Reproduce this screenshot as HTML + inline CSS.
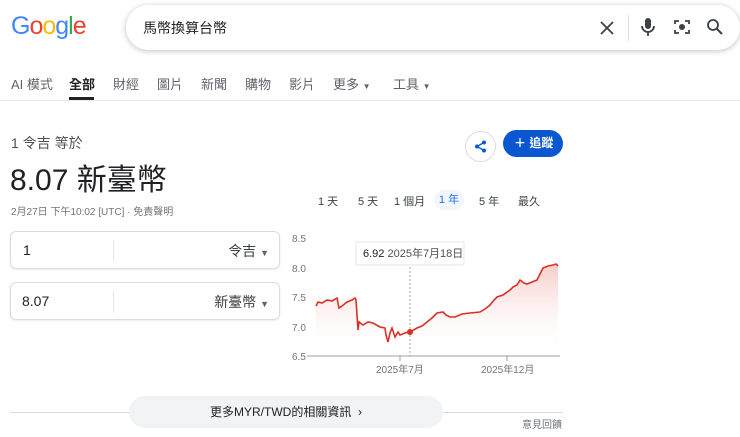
<!DOCTYPE html>
<html><head><meta charset="utf-8"><style>
*{margin:0;padding:0;box-sizing:border-box}
body{width:740px;height:437px;overflow:hidden;background:#fff;font-family:"Liberation Sans","Noto Sans CJK TC",sans-serif;color:#202124;position:relative}
.a{position:absolute}
.logo{left:11px;top:12px;font-size:25px;letter-spacing:-1px;font-family:"Liberation Sans",sans-serif}
.search{left:126px;top:5px;width:614px;height:45px;border-radius:24px;box-shadow:0 1px 6px rgba(32,33,36,.28);background:#fff}
.tabs span{position:absolute;top:74px;font-size:13px;color:#5f6368;white-space:nowrap}
.dd{font-size:8px;color:#5f6368}
.rng span{white-space:nowrap}
</style></head><body>
<div class="a logo"><span style="color:#4285f4">G</span><span style="color:#ea4335">o</span><span style="color:#fbbc05">o</span><span style="color:#4285f4">g</span><span style="color:#34a853">l</span><span style="color:#ea4335">e</span></div>
<div class="a search">
 <div class="a" style="left:17px;top:13px;font-size:14px;color:#202124">馬幣換算台幣</div>
 <svg class="a" style="left:473px;top:15px" width="16" height="16" viewBox="0 0 16 16"><path d="M2 2L14 14M14 2L2 14" stroke="#3c4043" stroke-width="1.8"/></svg>
 <div class="a" style="left:502px;top:10px;width:1px;height:26px;background:#dadce0"></div>
 <svg class="a" style="left:514px;top:12px" width="16" height="20" viewBox="0 0 16 20"><rect x="5" y="1" width="6" height="11" rx="3" fill="#3c4043"/><path d="M2 9a6 6 0 0 0 12 0M8 15v4" stroke="#3c4043" stroke-width="1.8" fill="none"/></svg>
 <svg class="a" style="left:547px;top:13px" width="18" height="18" viewBox="0 0 18 18"><path d="M2 6V3h4M12 3h4v3M2 12v3h4M16 12v3h-4" stroke="#3c4043" stroke-width="1.8" fill="none"/><circle cx="9" cy="9" r="3" fill="#3c4043"/></svg>
 <svg class="a" style="left:580px;top:13px" width="18" height="18" viewBox="0 0 18 18"><circle cx="7" cy="7" r="5" stroke="#3c4043" stroke-width="1.8" fill="none"/><path d="M11 11l5 5" stroke="#3c4043" stroke-width="2"/></svg>
</div>
<div class="tabs">
<span style="left:11px">AI 模式</span>
<span style="left:69px;color:#202124;font-weight:bold">全部</span>
<span style="left:113px">財經</span>
<span style="left:157px">圖片</span>
<span style="left:201px">新聞</span>
<span style="left:245px">購物</span>
<span style="left:289px">影片</span>
<span style="left:333px">更多 <b class="dd">▼</b></span>
<span style="left:393px">工具 <b class="dd">▼</b></span>
</div>
<div class="a" style="left:69px;top:97px;width:25px;height:3px;background:#202124"></div>
<div class="a" style="left:0;top:100px;width:740px;height:1px;background:#ebebeb"></div>

<div class="a" style="left:11px;top:133px;font-size:14px;color:#4d5156">1 令吉 等於</div>
<div class="a" style="left:10px;top:155px;font-size:30px;color:#202124">8.07 新臺幣</div>
<div class="a" style="left:11px;top:203px;font-size:10px;color:#70757a">2月27日 下午10:02 [UTC] · 免責聲明</div>

<div class="a" style="left:465px;top:131px;width:31px;height:31px;border:1px solid #dadce0;border-radius:50%"></div>
<svg class="a" style="left:474px;top:140px" width="13" height="13" viewBox="0 0 13 13"><circle cx="10" cy="2.5" r="2" fill="#0b57d0"/><circle cx="3" cy="6.5" r="2" fill="#0b57d0"/><circle cx="10" cy="10.5" r="2" fill="#0b57d0"/><path d="M10 2.5L3 6.5L10 10.5" stroke="#0b57d0" stroke-width="1.3" fill="none"/></svg>
<div class="a" style="left:503px;top:130px;width:60px;height:27px;border-radius:14px;background:#0b57d0;color:#fff;font-size:12px;line-height:27px;padding-left:11px;font-weight:bold;white-space:nowrap">＋ 追蹤</div>

<div class="a" style="left:10px;top:231px;width:270px;height:38px;border:1px solid #dadce0;border-radius:6px;box-shadow:0 1px 2px rgba(0,0,0,.08)">
 <div class="a" style="left:12px;top:10px;font-size:14px">1</div>
 <div class="a" style="left:102px;top:8px;width:1px;height:22px;background:#e5e5e5"></div>
 <div class="a" style="right:10px;top:9px;font-size:14px;color:#3c4043">令吉 <span style="font-size:9px;color:#5f6368">▼</span></div>
</div>
<div class="a" style="left:10px;top:282px;width:270px;height:38px;border:1px solid #dadce0;border-radius:6px;box-shadow:0 1px 2px rgba(0,0,0,.08)">
 <div class="a" style="left:11px;top:10px;font-size:14px">8.07</div>
 <div class="a" style="left:102px;top:8px;width:1px;height:22px;background:#e5e5e5"></div>
 <div class="a" style="right:10px;top:9px;font-size:14px;color:#3c4043">新臺幣 <span style="font-size:9px;color:#5f6368">▼</span></div>
</div>

<div class="a rng" style="top:193px;left:0;width:600px;font-size:11px;color:#3c4043">
<span class="a" style="left:318px">1 天</span>
<span class="a" style="left:358px">5 天</span>
<span class="a" style="left:394px">1 個月</span>
<span class="a" style="left:434px;top:-3px;width:30px;height:20px;border-radius:10px;background:#f2f6fc;color:#1a73e8;text-align:center;line-height:20px">1 年</span>
<span class="a" style="left:479px">5 年</span>
<span class="a" style="left:518px">最久</span>
</div>

<svg class="a" style="left:280px;top:225px" width="300" height="155" viewBox="280 225 300 155">
<defs><linearGradient id="g" x1="0" y1="0" x2="0" y2="1"><stop offset="0" stop-color="#e8837a" stop-opacity=".4"/><stop offset="1" stop-color="#fff" stop-opacity="0"/></linearGradient></defs>
<g font-size="10" fill="#70757a" font-family="Liberation Sans">
<text x="292" y="242">8.5</text><text x="292" y="272">8.0</text><text x="292" y="301">7.5</text><text x="292" y="331">7.0</text><text x="292" y="360">6.5</text>
</g>
<path d="M316 306L318 302 327 300 337 298 339 308 342 306 347 302 355 298 356 300 358 330 359 322 363 325 373 323 380 327 385 328 388 342 392 328 395 337 398 332 400 335 410 332 417 328 427 322 437 313 443 312 450 317 455 317 462 314 480 312 490 305 497 297 510 290 513 287 520 280 527 284 537 280 543 268 553 265 558 266L558 356 316 356Z" fill="url(#g)"/>
<polyline points="316,306 318,302 322,303 327,300 332,301 337,298 339,308 342,306 347,302 352,300 355,298 356,300 358,330 359,322 363,325 368,322 373,323 380,327 385,328 386,335 388,342 390,333 392,328 395,337 398,332 400,335 405,333 410,332 417,328 422,326 427,322 432,318 437,313 443,312 446,315 450,317 455,317 462,314 470,313 480,312 485,309 490,305 494,300 497,297 503,295 510,290 513,287 517,285 520,280 524,283 527,284 532,282 537,280 540,274 543,268 548,266 553,265 556,264 558,266" fill="none" stroke="#d93025" stroke-width="1.6"/>
<line x1="410" y1="243" x2="410" y2="356" stroke="#aaa" stroke-dasharray="2,2"/>
<circle cx="410" cy="332" r="3" fill="#d93025"/>
<line x1="307" y1="356" x2="560" y2="356" stroke="#9aa0a6" stroke-width="1"/>
<line x1="400" y1="356" x2="400" y2="361" stroke="#9aa0a6"/><line x1="507" y1="356" x2="507" y2="361" stroke="#9aa0a6"/>
<g font-size="10" fill="#70757a" font-family="Liberation Sans,Noto Sans CJK TC"><text x="376" y="373">2025年7月</text><text x="481" y="373">2025年12月</text></g>
<rect x="356" y="242" width="108" height="23" fill="#fff" stroke="#e6e6e6" rx="1"/>
<text x="363" y="257" font-size="11" fill="#202124" font-family="Liberation Sans,Noto Sans CJK TC">6.92 <tspan fill="#4d5156">2025年7月18日</tspan></text>
</svg>

<div class="a" style="left:10px;top:412px;width:553px;height:1px;background:#dadce0"></div>
<div class="a" style="left:129px;top:396px;width:314px;height:32px;border-radius:16px;background:#f1f3f4;text-align:center;line-height:32px;font-size:12px;color:#202124">更多MYR/TWD的相關資訊 &nbsp;›</div>
<div class="a" style="left:522px;top:416px;font-size:10px;color:#70757a">意見回饋</div>
</body></html>
